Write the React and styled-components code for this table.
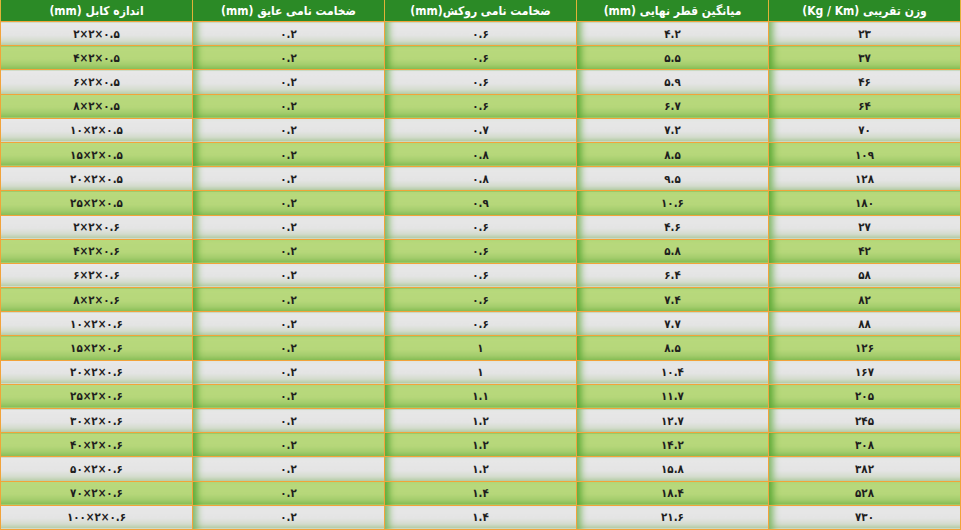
import React from 'react';
import styled, { createGlobalStyle } from 'styled-components';

const GlobalStyle = createGlobalStyle`
  html, body {
    margin: 0;
    padding: 0;
    background: #ffffff;
  }
  body {
    font-family: "DejaVu Sans Condensed", "DejaVu Sans", sans-serif;
  }
`;

const Table = styled.table`
  width: 961px;
  height: 530px;
  table-layout: fixed;
  border-collapse: collapse;
`;

const HeadCell = styled.th`
  height: 21px;
  padding: 0 6px;
  background: #2b8a26;
  color: #ffffff;
  font-size: 12px;
  font-weight: bold;
  text-align: center;
  border-left: 1px solid #e0b238;
  border-right: 1px solid #e0b238;
  border-bottom: 1px solid #f2a33a;
  white-space: nowrap;
`;

const Cell = styled.td`
  padding: 0;
  text-align: center;
  font-size: 11.5px;
  font-weight: bold;
  color: #1e1e1e;
  border: 1px solid #f2a33a;
  background: ${(p) =>
    p.$green
      ? 'linear-gradient(to bottom, #b8d97d 0%, #b6d77a 55%, #a3cc6c 80%, #86bd55 100%)'
      : 'linear-gradient(to bottom, #e8e8e8 0%, #e4e4e4 55%, #d4dccd 80%, #b4cca4 100%)'};
  box-shadow: ${(p) =>
    p.$first
      ? 'none'
      : p.$green
      ? 'inset 9px 0 7px -5px #5aa835'
      : 'inset 9px 0 7px -5px #7fb866'};
`;

const headers = [
  'اندازه کابل (mm)',
  'ضخامت نامی عایق (mm)',
  'ضخامت نامی روکش(mm)',
  'میانگین قطر نهایی (mm)',
  'وزن تقریبی (Kg / Km)',
];

const rows = [
  ['۲×۲×۰.۵', '۰.۲', '۰.۶', '۴.۲', '۲۳'],
  ['۴×۲×۰.۵', '۰.۲', '۰.۶', '۵.۵', '۳۷'],
  ['۶×۲×۰.۵', '۰.۲', '۰.۶', '۵.۹', '۴۶'],
  ['۸×۲×۰.۵', '۰.۲', '۰.۶', '۶.۷', '۶۴'],
  ['۱۰×۲×۰.۵', '۰.۲', '۰.۷', '۷.۲', '۷۰'],
  ['۱۵×۲×۰.۵', '۰.۲', '۰.۸', '۸.۵', '۱۰۹'],
  ['۲۰×۲×۰.۵', '۰.۲', '۰.۸', '۹.۵', '۱۲۸'],
  ['۲۵×۲×۰.۵', '۰.۲', '۰.۹', '۱۰.۶', '۱۸۰'],
  ['۲×۲×۰.۶', '۰.۲', '۰.۶', '۴.۶', '۲۷'],
  ['۴×۲×۰.۶', '۰.۲', '۰.۶', '۵.۸', '۴۲'],
  ['۶×۲×۰.۶', '۰.۲', '۰.۶', '۶.۴', '۵۸'],
  ['۸×۲×۰.۶', '۰.۲', '۰.۶', '۷.۴', '۸۲'],
  ['۱۰×۲×۰.۶', '۰.۲', '۰.۶', '۷.۷', '۸۸'],
  ['۱۵×۲×۰.۶', '۰.۲', '۱', '۸.۵', '۱۲۶'],
  ['۲۰×۲×۰.۶', '۰.۲', '۱', '۱۰.۴', '۱۶۷'],
  ['۲۵×۲×۰.۶', '۰.۲', '۱.۱', '۱۱.۷', '۲۰۵'],
  ['۳۰×۲×۰.۶', '۰.۲', '۱.۲', '۱۲.۷', '۲۴۵'],
  ['۴۰×۲×۰.۶', '۰.۲', '۱.۲', '۱۴.۲', '۳۰۸'],
  ['۵۰×۲×۰.۶', '۰.۲', '۱.۲', '۱۵.۸', '۳۸۲'],
  ['۷۰×۲×۰.۶', '۰.۲', '۱.۴', '۱۸.۴', '۵۲۸'],
  ['۱۰۰×۲×۰.۶', '۰.۲', '۱.۴', '۲۱.۶', '۷۳۰'],
];

export default function App() {
  return (
    <>
      <GlobalStyle />
      <Table>
        <thead>
          <tr>
            {headers.map((h) => (
              <HeadCell key={h} dir="rtl">
                {h}
              </HeadCell>
            ))}
          </tr>
        </thead>
        <tbody>
          {rows.map((row, i) => (
            <tr key={i}>
              {row.map((v, j) => (
                <Cell key={j} dir="ltr" $green={i % 2 === 1} $first={j === 0}>
                  {v}
                </Cell>
              ))}
            </tr>
          ))}
        </tbody>
      </Table>
    </>
  );
}
